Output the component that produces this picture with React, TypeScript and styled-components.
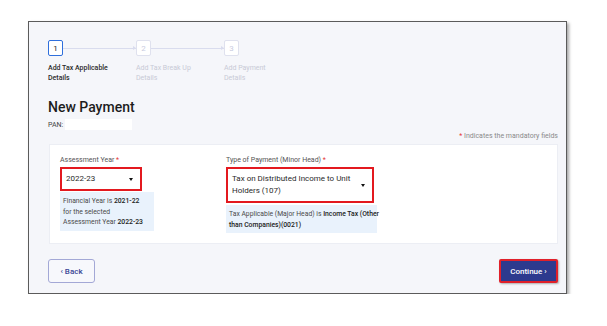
import React from "react";
import styled, { createGlobalStyle } from "styled-components";

const GlobalStyle = createGlobalStyle`
  body {
    margin: 0;
    background: #ffffff;
    font-family: Roboto, "Liberation Sans", Arial, sans-serif;
  }
`;

const Page = styled.div`
  padding: 21px 0 0 28px;
`;

const Frame = styled.section`
  box-sizing: border-box;
  width: 539px;
  height: 273px;
  border: 1px solid #5b5b5b;
  background: #f5f6fa;
  box-shadow: 2px 2px 3px rgba(0, 0, 0, 0.35);
  padding: 18px 8px 10px 19px;
  display: flex;
  flex-direction: column;
`;

const Stepper = styled.div`
  display: flex;
`;

const Step = styled.div`
  width: 88px;
  display: flex;
  flex-direction: column;
`;

const StepHead = styled.div`
  display: flex;
  align-items: center;
`;

const StepBox = styled.div<{ $active?: boolean }>`
  box-sizing: border-box;
  width: 15px;
  height: 16px;
  border: 1.5px solid ${(p) => (p.$active ? "#2f6fdc" : "#dfe1ee")};
  border-radius: 2px;
  background: #ffffff;
  display: flex;
  align-items: center;
  justify-content: center;
  font-size: 8px;
  color: ${(p) => (p.$active ? "#222" : "#c9ccdf")};
`;

const Connector = styled.div`
  flex: 1;
  height: 1px;
  background: #d9dcee;
  position: relative;
  &::after {
    content: "";
    position: absolute;
    right: 0;
    top: -2px;
    border-left: 3px solid #d9dcee;
    border-top: 2.5px solid transparent;
    border-bottom: 2.5px solid transparent;
  }
`;

const StepLabel = styled.div<{ $active?: boolean }>`
  margin-top: 7px;
  font-size: 7px;
  line-height: 10px;
  width: 60px;
  font-weight: ${(p) => (p.$active ? 500 : 400)};
  color: ${(p) => (p.$active ? "#2b2b2b" : "#c8cad6")};
`;

const Title = styled.h1`
  margin: 15px 0 0;
  font-size: 14px;
  line-height: 18px;
  font-weight: 500;
  color: #1d1d1d;
`;

const PanRow = styled.div`
  display: flex;
  align-items: center;
  gap: 2px;
  margin-top: 3px;
  font-size: 7px;
  color: #444;
`;

const PanValue = styled.span`
  width: 67px;
  height: 11px;
  background: #ffffff;
`;

const Note = styled.div`
  margin-top: 1px;
  text-align: right;
  font-size: 7px;
  line-height: 10px;
  color: #8a8a8a;
`;

const Star = styled.span`
  color: #e53935;
`;

const Card = styled.div`
  margin: 3px 0 0 1px;
  box-sizing: border-box;
  height: 100px;
  background: #ffffff;
  border: 1px solid #eceef4;
  padding: 10px 0 0 10px;
  display: flex;
`;

const Field = styled.div<{ $width: number }>`
  width: ${(p) => p.$width}px;
  display: flex;
  flex-direction: column;
`;

const FieldLabel = styled.div`
  font-size: 7px;
  line-height: 10px;
  color: #555;
  margin-bottom: 2px;
`;

const Select = styled.div<{ $width: number }>`
  box-sizing: border-box;
  width: ${(p) => p.$width}px;
  min-height: 24px;
  border: 2px solid #e3191f;
  background: #ffffff;
  padding: 4px 7px 4px 4px;
  display: flex;
  align-items: center;
  justify-content: space-between;
  font-size: 8px;
  line-height: 12px;
  color: #2a2a2a;
`;

const Caret = styled.span`
  flex: none;
  margin-left: 6px;
  border-top: 3px solid #111;
  border-left: 2px solid transparent;
  border-right: 2px solid transparent;
`;

const Info = styled.div<{ $width: number; $top: number }>`
  box-sizing: border-box;
  width: ${(p) => p.$width}px;
  margin-top: ${(p) => p.$top}px;
  background: #e9f2fc;
  padding: 4px 3px 3px;
  font-size: 6.8px;
  line-height: 10.5px;
  color: #4a4a4a;
  white-space: nowrap;
  b {
    font-weight: 500;
    color: #222;
  }
`;

const Actions = styled.div`
  margin-top: auto;
  display: flex;
  justify-content: space-between;
`;

const BackButton = styled.button`
  box-sizing: border-box;
  width: 47px;
  height: 24px;
  border: 1px solid #a3a8d6;
  border-radius: 3px;
  background: #f7f8fc;
  color: #3a4796;
  font-family: inherit;
  font-size: 8px;
  font-weight: 500;
  padding: 0;
`;

const ContinueButton = styled.button`
  box-sizing: border-box;
  width: 59px;
  height: 24px;
  border: 2px solid #e0202a;
  border-radius: 2px;
  background: #2d3a8e;
  color: #ffffff;
  font-family: inherit;
  font-size: 8px;
  font-weight: 500;
  padding: 0;
  box-shadow: 1px 1px 2px rgba(0, 0, 0, 0.3);
`;

const steps = [
  { n: 1, label: "Add Tax Applicable Details" },
  { n: 2, label: "Add Tax Break Up Details" },
  { n: 3, label: "Add Payment Details" },
];

export default function App() {
  return (
    <>
      <GlobalStyle />
      <Page>
        <Frame>
          <Stepper>
            {steps.map((s, i) => (
              <Step key={s.n}>
                <StepHead>
                  <StepBox $active={i === 0}>{s.n}</StepBox>
                  {i < steps.length - 1 && <Connector />}
                </StepHead>
                <StepLabel $active={i === 0}>{s.label}</StepLabel>
              </Step>
            ))}
          </Stepper>

          <Title>New Payment</Title>
          <PanRow>
            PAN: <PanValue />
          </PanRow>

          <Note>
            <Star>*</Star> Indicates the mandatory fields
          </Note>

          <Card>
            <Field $width={166}>
              <FieldLabel>
                Assessment Year <Star>*</Star>
              </FieldLabel>
              <Select $width={82}>
                2022-23
                <Caret />
              </Select>
              <Info $width={94} $top={1}>
                Financial Year is <b>2021-22</b>
                <br />
                for the selected
                <br />
                Assessment Year <b>2022-23</b>
              </Info>
            </Field>
            <Field $width={160}>
              <FieldLabel>
                Type of Payment (Minor Head) <Star>*</Star>
              </FieldLabel>
              <Select $width={148}>
                <span>
                  Tax on Distributed Income to Unit
                  <br />
                  Holders (107)
                </span>
                <Caret />
              </Select>
              <Info $width={151} $top={2}>
                Tax Applicable (Major Head) is <b>Income Tax (Other</b>
                <br />
                <b>than Companies)(0021)</b>
              </Info>
            </Field>
          </Card>

          <Actions>
            <BackButton>‹ Back</BackButton>
            <ContinueButton>Continue ›</ContinueButton>
          </Actions>
        </Frame>
      </Page>
    </>
  );
}
